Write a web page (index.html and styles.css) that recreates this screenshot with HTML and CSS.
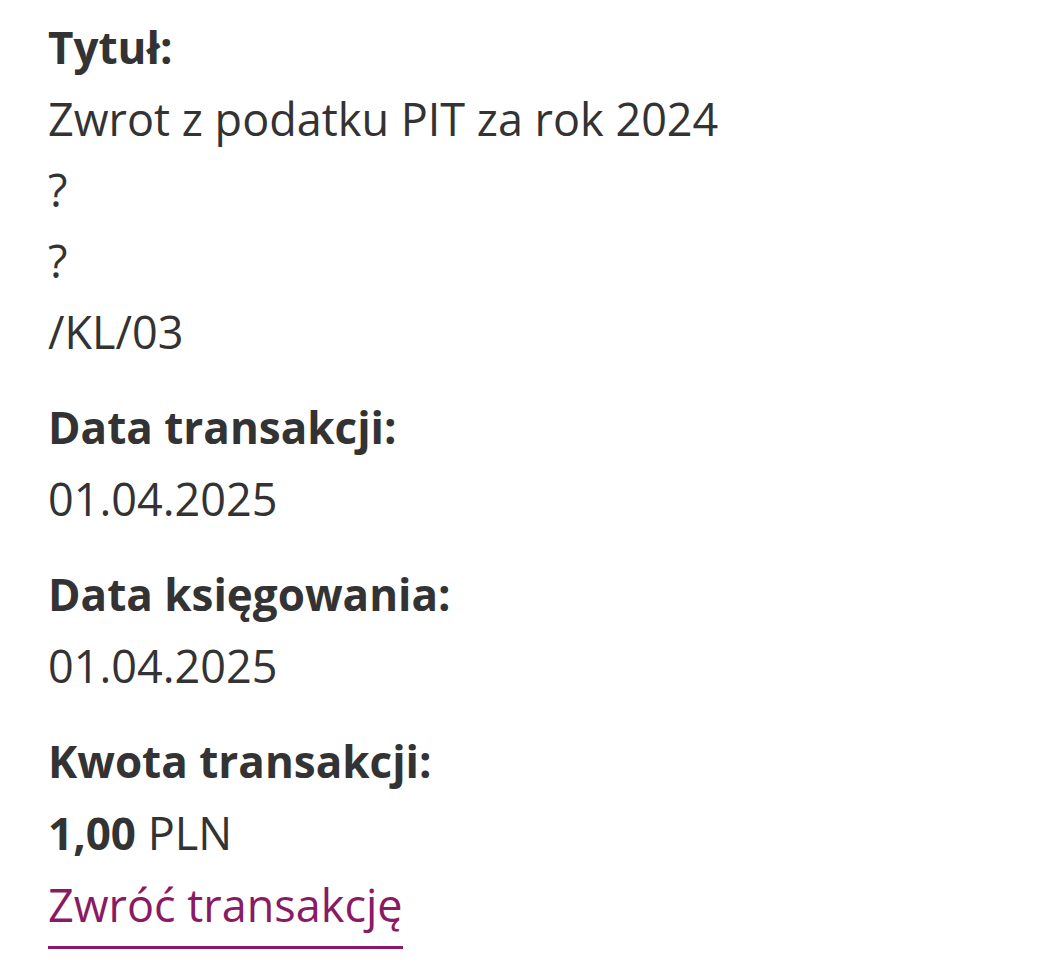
FILE: index.html
```html
<!DOCTYPE html>
<html lang="pl">
<head>
<meta charset="utf-8">
<title>Szczegóły transakcji</title>
<link rel="stylesheet" href="styles.css">
</head>
<body>
<main class="details">
  <section class="group">
    <div class="label">Tytuł:</div>
    <div class="value">Zwrot z podatku PIT za rok 2024</div>
    <div class="value">?</div>
    <div class="value">?</div>
    <div class="value">/KL/03</div>
  </section>
  <section class="group">
    <div class="label">Data transakcji:</div>
    <div class="value">01.04.2025</div>
  </section>
  <section class="group">
    <div class="label">Data księgowania:</div>
    <div class="value">01.04.2025</div>
  </section>
  <section class="group">
    <div class="label">Kwota transakcji:</div>
    <div class="value"><strong class="amount">1,00</strong> PLN</div>
    <div class="value"><a class="link" href="#">Zwróć transakcję</a></div>
  </section>
</main>
</body>
</html>
```

FILE: styles.css
```css
html, body {
  margin: 0;
  padding: 0;
  background: #ffffff;
}

body {
  font-family: "Open Sans", "Noto Sans", sans-serif;
  color: #333333;
  font-size: 45px;
  line-height: 71px;
}

.details {
  display: flex;
  flex-direction: column;
  gap: 25px;
  padding: 12px 0 0 48px;
}

.group {
  display: flex;
  flex-direction: column;
}

.label {
  font-weight: 700;
  font-size: 44px;
}

.value {
  font-weight: 400;
  white-space: nowrap;
}

.amount {
  font-weight: 700;
  font-size: 44px;
}

.link {
  display: inline-block;
  color: #8a1a63;
  text-decoration: none;
  border-bottom: 3px solid #8a1a63;
  padding-bottom: 6px;
}
```
